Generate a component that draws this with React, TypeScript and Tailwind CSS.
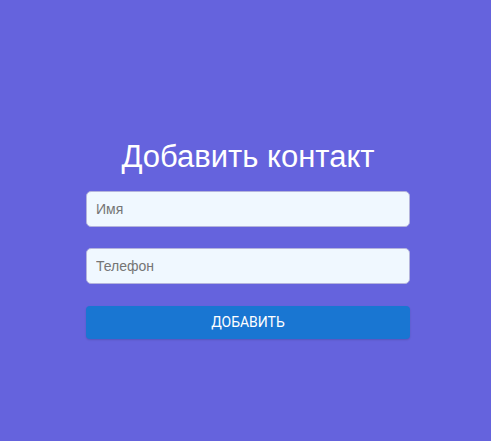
export default function App() {
  return (
    <div className="min-h-[441px] w-full bg-[#6563dd] flex justify-center font-['Liberation_Sans',Arial,sans-serif]">
      <form className="mt-[135px] ml-[5px] w-[324px] flex flex-col">
        <h1 className="text-center text-white text-[31px] leading-[44px] mb-[12px]">Добавить контакт</h1>
        <input
          placeholder="Имя"
          className="h-[36px] rounded-[5px] bg-[#f0f8ff] border border-[#b4b4dc] px-[9px] text-[14px] placeholder:text-[#757575] outline-none"
        />
        <input
          placeholder="Телефон"
          className="mt-[21px] h-[36px] rounded-[5px] bg-[#f0f8ff] border border-[#b4b4dc] px-[9px] text-[14px] placeholder:text-[#757575] outline-none"
        />
        <button
          type="button"
          className="mt-[22px] h-[33px] rounded-[4px] bg-[#1976d2] text-white text-[14px] uppercase font-['Roboto',sans-serif] shadow-[0_1px_2px_rgba(0,0,0,0.15)]"
        >
          Добавить
        </button>
      </form>
    </div>
  );
}
